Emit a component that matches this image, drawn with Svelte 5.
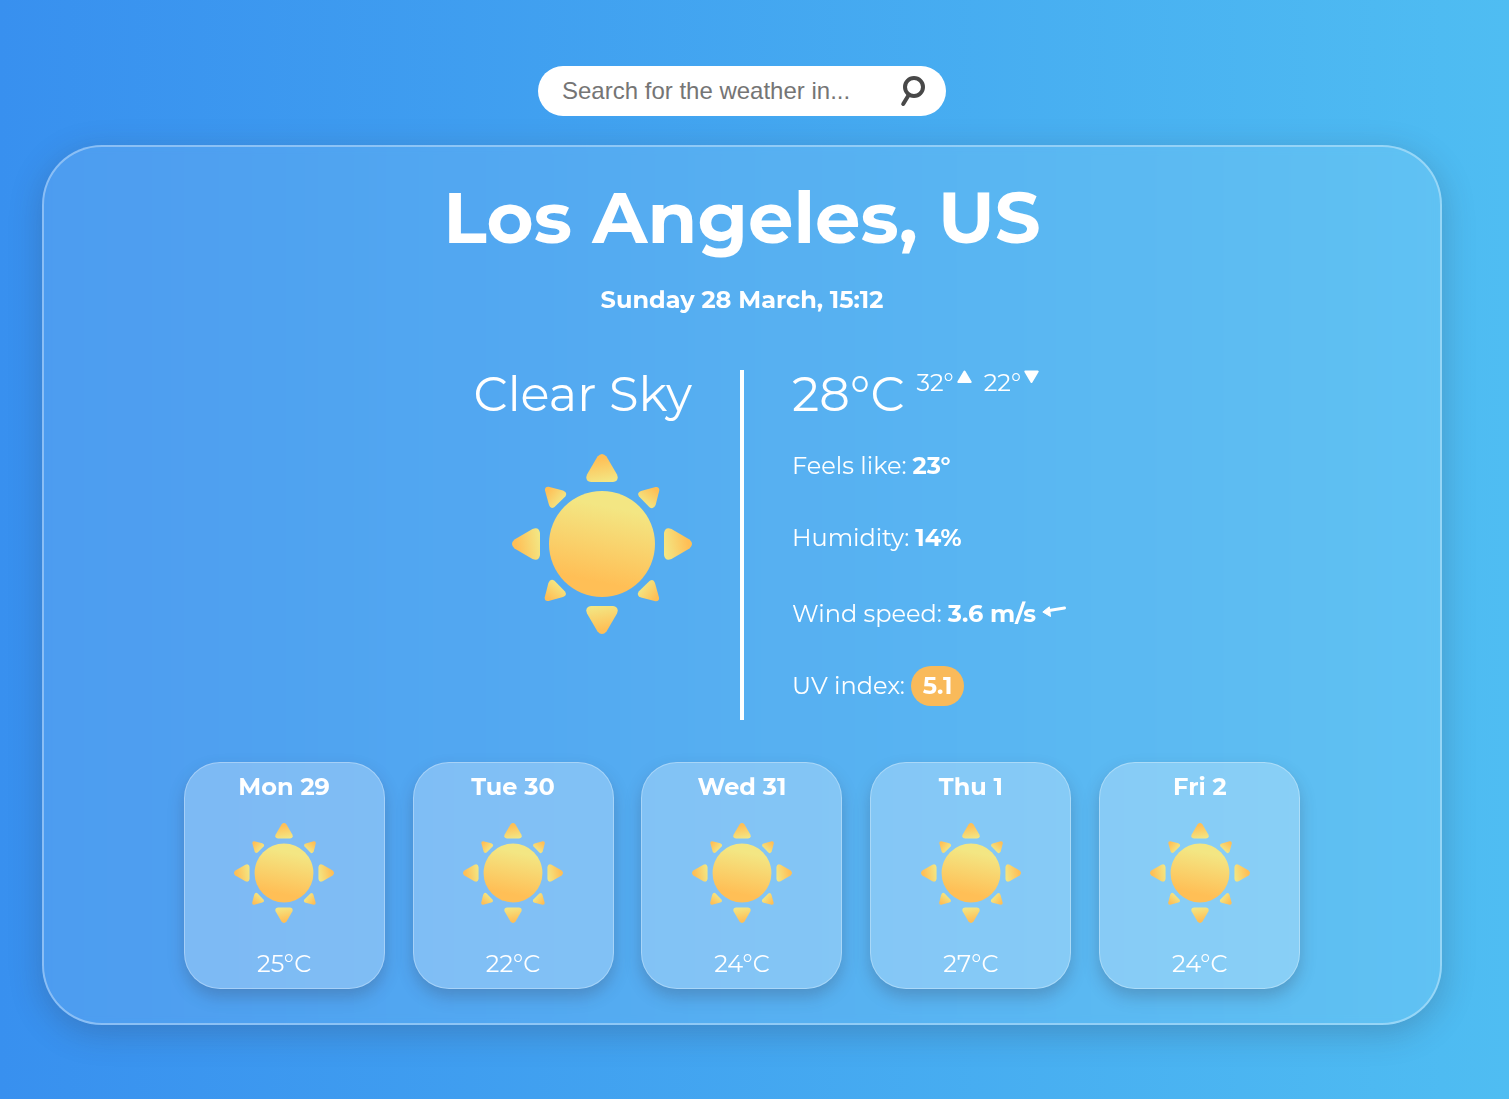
<script>
  const forecast = [
    { day: 'Mon 29', temp: 25 },
    { day: 'Tue 30', temp: 22 },
    { day: 'Wed 31', temp: 24 },
    { day: 'Thu 1', temp: 27 },
    { day: 'Fri 2', temp: 24 }
  ];
  let query = $state('');
</script>

{#snippet sun()}
  <svg class="sun" viewBox="0 0 180 180" aria-hidden="true">
    <defs>
      <linearGradient id="disc" x1="0.6" y1="0" x2="0.4" y2="1">
        <stop offset="0.15" stop-color="#f3e683" />
        <stop offset="0.85" stop-color="#ffbf56" />
      </linearGradient>
      <linearGradient id="ray" x1="0.4" y1="0" x2="0.6" y2="1">
        <stop offset="0.15" stop-color="#ffbf56" />
        <stop offset="1" stop-color="#f3e683" />
      </linearGradient>
      <linearGradient id="spark" x1="0" y1="0.1" x2="0.8" y2="0.7">
        <stop offset="0.15" stop-color="#ffbf56" />
        <stop offset="1" stop-color="#f3e683" />
      </linearGradient>
    </defs>
    <circle cx="90" cy="90" r="53" fill="url(#disc)" />
    {#each [0, 90, 180, 270] as angle}
      <g transform="rotate({angle} 90 90)">
        <path fill="url(#ray)" d="M85.500 2.500Q90-2.500 94.500 2.500L105 20.500Q107.500 27 101 28H79Q72.500 27 75 20.500Z" />
        <path fill="url(#spark)" d="M36.500 32.700L51 36.400Q56 38.500 53.300 42.500L42.500 53Q38.500 55.500 37 51L33 36.500Q32.500 32.500 36.500 32.700Z" />
      </g>
    {/each}
  </svg>
{/snippet}

<div class="page">
  <form class="search" onsubmit={(e) => e.preventDefault()}>
    <input type="text" aria-label="Search for the weather in" placeholder="Search for the weather in..." bind:value={query} />
    <button type="submit" aria-label="Search">
      <svg width="26" height="32" viewBox="0 0 26 32" fill="none" stroke="#484848" stroke-width="4" stroke-linecap="round">
        <circle cx="14" cy="12" r="9" />
        <path d="M8.700 20L3.200 29" />
      </svg>
    </button>
  </form>

  <main class="panel">
    <h1>Los Angeles, US</h1>
    <p class="date">Sunday 28 March, 15:12</p>

    <section class="current">
      <div class="sky">
        <h2>Clear Sky</h2>
        {@render sun()}
      </div>
      <div class="details">
        <div class="temps">
          <span class="now">28°C</span>
          <span class="range">32°<svg width="16" height="14" viewBox="0 0 16 14" fill="#fff" stroke="#fff" stroke-width="2" stroke-linejoin="round"><path d="M8.500 1.500L14.700 12H2.300Z" /></svg></span>
          <span class="range">22°<svg width="16" height="14" viewBox="0 0 16 14" fill="#fff" stroke="#fff" stroke-width="2" stroke-linejoin="round"><path d="M8.500 12L14.700 1.500H2.300Z" /></svg></span>
        </div>
        <p>Feels like: <strong>23°</strong></p>
        <p>Humidity: <strong>14%</strong></p>
        <p class="wind">Wind speed: <strong>3.6 m/s</strong>
          <svg width="26" height="24" viewBox="0 0 26 24"><path d="M7 8.500L22.500 6" stroke="#fff" stroke-width="3" stroke-linecap="round" /><path d="M.800 10L7.300 4.800L8.500 14.500Z" fill="#fff" stroke="#fff" stroke-linejoin="round" /></svg>
        </p>
        <p>UV index: <strong class="uv">5.1</strong></p>
      </div>
    </section>

    <section class="forecast">
      {#each forecast as item}
        <article class="card">
          <h3>{item.day}</h3>
          {@render sun()}
          <p>{item.temp}°C</p>
        </article>
      {/each}
    </section>
  </main>
</div>

<style>
  :global(body) {
    background: #3a93f0;
  }
  .page {
    box-sizing: border-box;
    min-height: 100vh;
    padding: 66px 67px 74px 42px;
    background: linear-gradient(90deg, #3890ef, #4fbdf2);
    color: #fff;
    font-family: Montserrat, Inter, 'Open Sans', sans-serif;
    font-size: 24px;
    line-height: 40px;
  }
  h1, h2, h3, p {
    margin: 0;
  }
  svg {
    display: block;
    flex: none;
  }
  .search {
    box-sizing: border-box;
    display: flex;
    align-items: center;
    width: 408px;
    max-width: 100%;
    height: 50px;
    margin: 0 auto 29px;
    padding: 0 20px 0 24px;
    border-radius: 25px;
    background: #fff;
  }
  .search input {
    flex: 1;
    min-width: 0;
    padding: 0;
    border: 0;
    outline: 0;
    background: none;
    color: #444;
    font: 24px 'Liberation Sans', Arial, sans-serif;
  }
  .search input::placeholder {
    color: #757575;
  }
  .search button {
    padding: 0;
    border: 0;
    background: none;
    cursor: pointer;
  }
  .panel {
    box-sizing: border-box;
    max-width: 1400px;
    margin: 0 auto;
    padding: 26px 0 34px;
    border: 2px solid rgba(255, 255, 255, 0.35);
    border-radius: 60px;
    background: rgba(255, 255, 255, 0.1);
    box-shadow: 0 8px 32px rgba(50, 50, 70, 0.25);
    backdrop-filter: blur(4px);
  }
  h1 {
    font-size: 72px;
    line-height: 88px;
    font-weight: 700;
    text-align: center;
  }
  .date {
    margin-top: 19px;
    font-weight: 700;
    text-align: center;
  }
  .current {
    display: grid;
    grid-template-columns: 1fr 1fr;
    margin-top: 50px;
  }
  .sky {
    display: flex;
    flex-direction: column;
    align-items: flex-end;
    gap: 36px;
    margin-right: -2px;
    padding-right: 48px;
    border-right: 4px solid #fff;
  }
  .sky .sun {
    width: 180px;
  }
  h2, .now {
    font-size: 48px;
    line-height: 48px;
    font-weight: 400;
  }
  .details {
    display: flex;
    flex-direction: column;
    gap: 32px;
    min-height: 350px;
    padding-left: 50px;
    box-sizing: border-box;
  }
  .details p {
    display: flex;
    align-items: center;
    gap: 6px;
  }
  .temps {
    display: flex;
    gap: 12px;
    height: 44px;
  }
  .range {
    display: flex;
    gap: 2px;
    line-height: 26px;
  }
  .details .wind {
    padding-top: 4px;
  }
  .uv {
    padding: 0 12px;
    border-radius: 20px;
    background: #f9ba5a;
  }
  .forecast {
    display: flex;
    justify-content: space-between;
    width: 80%;
    margin: 42px auto 0;
  }
  .card {
    box-sizing: border-box;
    display: flex;
    flex-direction: column;
    align-items: center;
    width: 18%;
    padding: 4px 0;
    border: 1px solid rgba(255, 255, 255, 0.3);
    border-radius: 36px;
    background: rgba(255, 255, 255, 0.27);
    box-shadow: 0 8px 16px rgba(50, 50, 70, 0.25);
  }
  .card .sun {
    width: 100px;
    margin: 16px 0 21px;
  }
  h3 {
    font-size: 24px;
    line-height: 40px;
    font-weight: 700;
  }
</style>
